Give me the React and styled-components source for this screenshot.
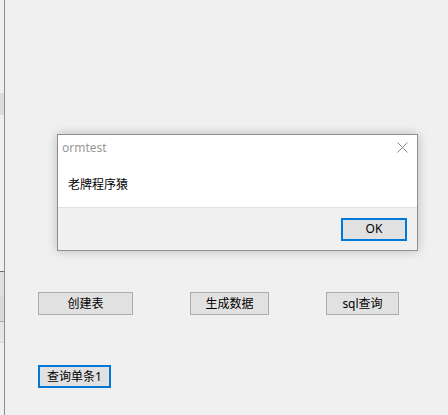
import styled, { createGlobalStyle } from "styled-components";

const GlobalStyle = createGlobalStyle`
  html, body {
    margin: 0;
    padding: 0;
    background: #f0f0f0;
  }
  body {
    font-family: "Noto Sans", "Noto Sans CJK SC", sans-serif;
    font-size: 12px;
    color: #000;
  }
`;

export const Window = styled.div`
  position: relative;
  width: 448px;
  height: 415px;
  display: flex;
  flex-direction: row;
  background: #f0f0f0;
  overflow: hidden;
`;

export const EdgeStrip = styled.div`
  width: 4px;
  flex-shrink: 0;
  display: flex;
  flex-direction: column;
  border-right: 1px solid #8c8c8c;
`;

export const EdgeBlock = styled.div`
  height: ${(p) => p.h}px;
  background: ${(p) => p.bg || "transparent"};
  border-bottom: ${(p) => (p.line ? `1px solid ${p.line}` : "none")};
`;

export const Content = styled.div`
  flex: 1;
  display: flex;
  flex-direction: column;
  padding: 292px 0 0 33px;
`;

export const ButtonRow = styled.div`
  display: flex;
  flex-direction: row;
  gap: 57px;
  margin-bottom: 50px;
`;

export const FormButton = styled.button`
  box-sizing: border-box;
  width: ${(p) => p.w}px;
  height: ${(p) => p.h || 23}px;
  padding: 0;
  background: #e1e1e1;
  border: ${(p) => (p.focused ? "2px solid #0078d7" : "1px solid #adadad")};
  font-family: "Noto Sans", "Noto Sans CJK SC", sans-serif;
  font-size: 12px;
  color: #000;
  line-height: 1;
`;

export const Dialog = styled.div`
  position: absolute;
  left: 57px;
  top: 134px;
  box-sizing: border-box;
  width: 361px;
  height: 117px;
  display: flex;
  flex-direction: column;
  border: 1px solid #8f8f8f;
  background: #fff;
  box-shadow: 0 0 10px rgba(0, 0, 0, 0.22);
`;

export const TitleBar = styled.div`
  height: 25px;
  display: flex;
  align-items: center;
  justify-content: space-between;
  padding: 0 9px 0 4px;
  color: #999;
  font-size: 12px;
`;

export const CloseBtn = styled.span`
  width: 11px;
  height: 11px;
  display: flex;
  svg {
    display: block;
  }
`;

export const Message = styled.div`
  height: 47px;
  display: flex;
  align-items: center;
  padding-left: 10px;
  font-size: 12px;
  color: #000;
`;

export const Footer = styled.div`
  flex: 1;
  display: flex;
  align-items: center;
  justify-content: flex-end;
  padding-right: 10px;
  background: #f0f0f0;
  border-top: 1px solid #dfdfdf;
`;

const App = () => {
  return (
    <>
      <GlobalStyle />
      <Window>
        <EdgeStrip>
          <EdgeBlock h={93} />
          <EdgeBlock h={22} bg="#dcdcdc" />
          <EdgeBlock h={156} line="#6e6e6e" />
          <EdgeBlock h={24} bg="#e0e0e0" />
          <EdgeBlock h={25} bg="#dadada" line="#a8a8a8" />
          <EdgeBlock h={20} bg="#e6e6e6" line="#d8d8d8" />
        </EdgeStrip>
        <Content>
          <ButtonRow>
            <FormButton w={95}>创建表</FormButton>
            <FormButton w={79}>生成数据</FormButton>
            <FormButton w={73}>sql查询</FormButton>
          </ButtonRow>
          <ButtonRow>
            <FormButton w={73} focused>
              查询单条1
            </FormButton>
          </ButtonRow>
        </Content>

        <Dialog>
          <TitleBar>
            <span>ormtest</span>
            <CloseBtn>
              <svg width="11" height="11" viewBox="0 0 11 11">
                <path
                  d="M0.5 0.5 L10.5 10.5 M10.5 0.5 L0.5 10.5"
                  stroke="#8a8a8a"
                  strokeWidth="1"
                  fill="none"
                />
              </svg>
            </CloseBtn>
          </TitleBar>
          <Message>老牌程序猿</Message>
          <Footer>
            <FormButton w={66} focused>
              OK
            </FormButton>
          </Footer>
        </Dialog>
      </Window>
    </>
  );
};

export default App;
